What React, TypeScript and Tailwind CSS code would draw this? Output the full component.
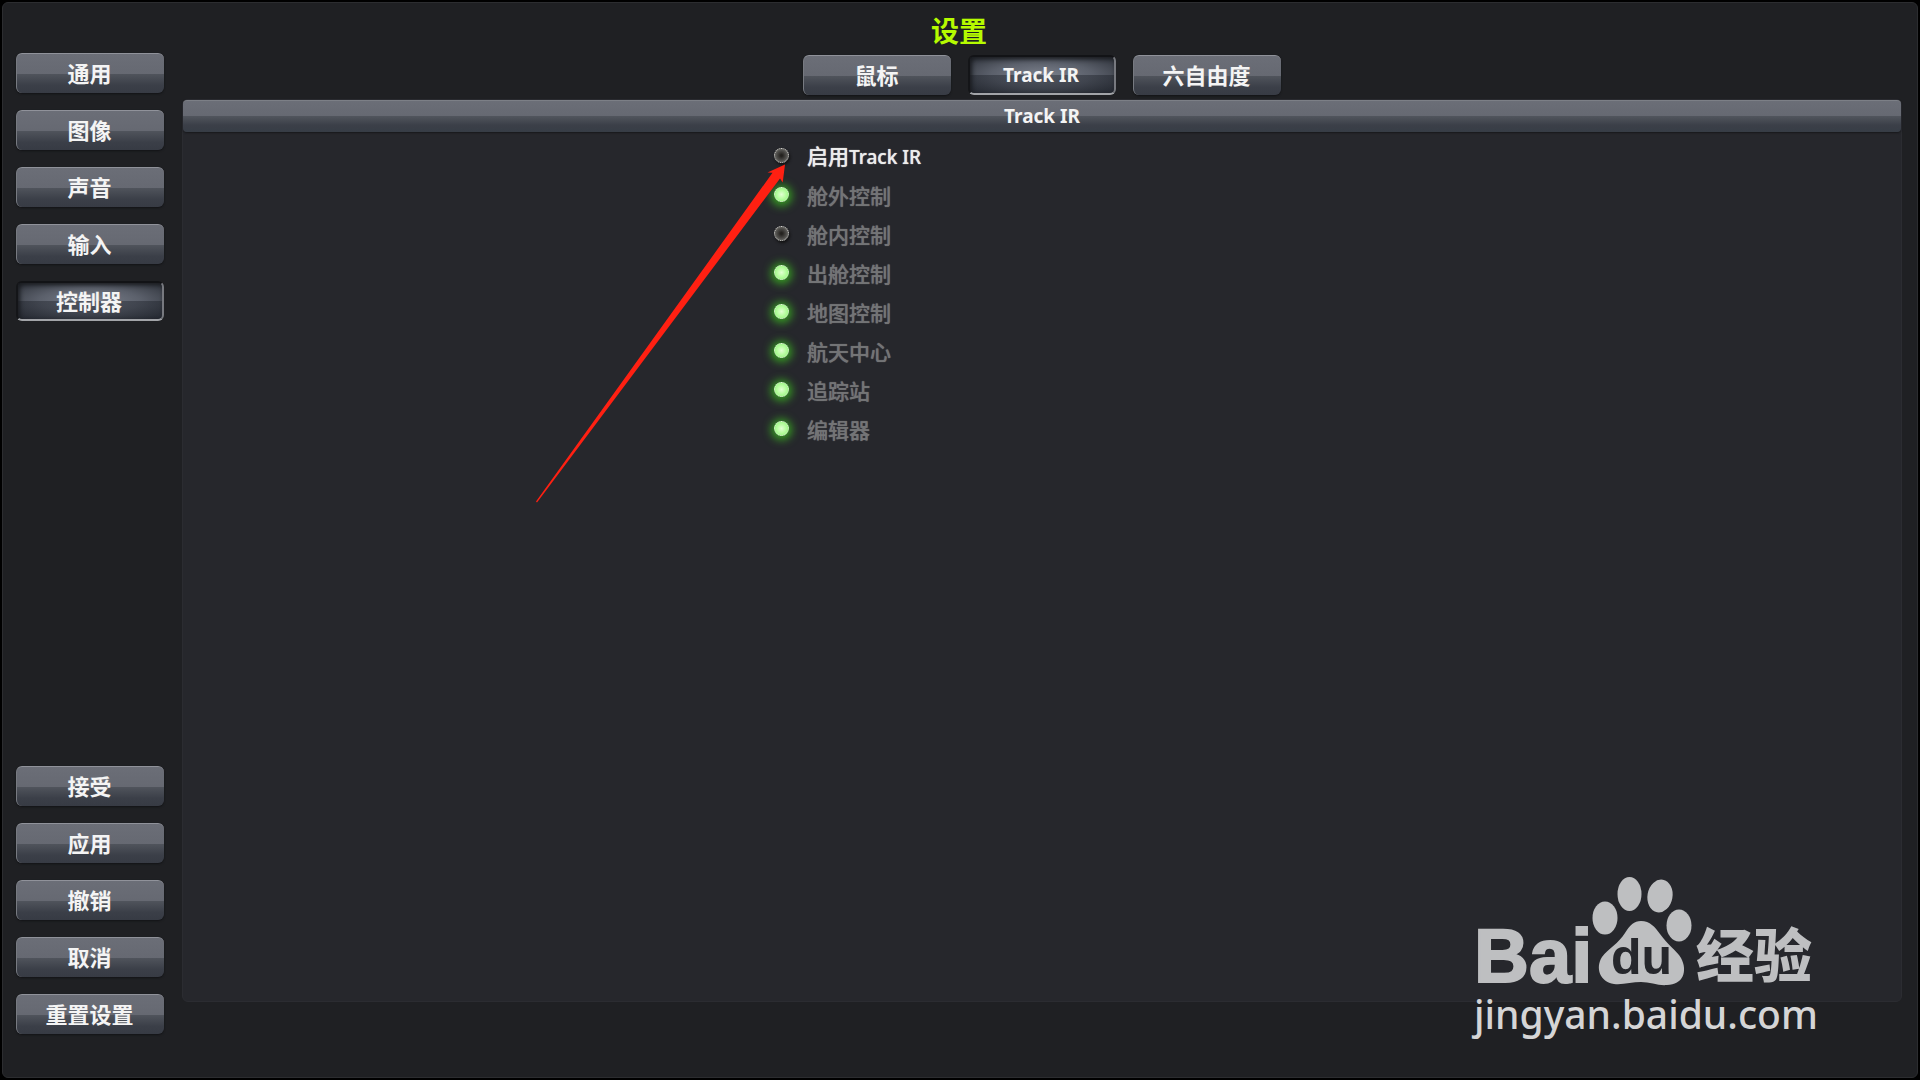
import { useState } from 'react';
import clsx from 'clsx';

const sections = ['通用', '图像', '声音', '输入', '控制器'];
const actions = ['接受', '应用', '撤销', '取消', '重置设置'];
const tabs = ['鼠标', 'Track IR', '六自由度'];

const initialOptions = [
  { id: 'enable', label: '启用', suffix: 'Track IR', on: false, active: true },
  { id: 'external', label: '舱外控制', on: true, active: false },
  { id: 'iva', label: '舱内控制', on: false, active: false },
  { id: 'eva', label: '出舱控制', on: true, active: false },
  { id: 'map', label: '地图控制', on: true, active: false },
  { id: 'ksc', label: '航天中心', on: true, active: false },
  { id: 'tracking', label: '追踪站', on: true, active: false },
  { id: 'editor', label: '编辑器', on: true, active: false },
];

interface GameButtonProps {
  label: string;
  selected?: boolean;
  onClick?: () => void;
}

function GameButton({ label, selected = false, onClick }: GameButtonProps) {
  return (
    <button
      type="button"
      onClick={onClick}
      className={clsx(
        'flex h-10 w-[148px] shrink-0 items-center justify-center rounded-md pr-0.5 text-[22px] leading-none font-bold text-[#f4f4f4]',
        selected
          ? 'border-2 border-t-[#121316] border-r-[#77797f] border-b-[#a2a4a8] border-l-[#141518] bg-[linear-gradient(to_bottom,transparent_50%,rgba(22,26,34,0.4)_50%),radial-gradient(ellipse_at_center,#7b808c_0%,#5b606b_50%,#2b2f37_100%)] shadow-[inset_2px_2px_4px_#1a1c20]'
          : 'border-t border-l border-t-[#90929a] border-l-[#777a81] bg-[linear-gradient(to_bottom,#6b6e77_0%,#666972_50%,#50545c_51%,#3b3f48_80%,#373b44_100%)] pb-0.5 shadow-[0_1px_2px_#121316]',
      )}
    >
      <span className={label === 'Track IR' ? 'text-[19px]' : undefined}>{label}</span>
    </button>
  );
}

interface LedOptionProps {
  id: string;
  label: string;
  suffix?: string;
  on: boolean;
  active: boolean;
  onToggle: () => void;
}

function LedOption({ id, label, suffix, on, active, onToggle }: LedOptionProps) {
  return (
    <li className="flex h-[39px] items-center gap-[18px] pl-[7px]">
      <input
        id={id}
        type="checkbox"
        checked={on}
        onChange={onToggle}
        className="size-[15px] appearance-none rounded-full border border-dotted border-[#d6d6d2] bg-[radial-gradient(circle,#24221f_10%,#4b4a47_50%,#84837f_100%)] shadow-[1px_2px_3px_#111] checked:border-[#e4f8dc] checked:bg-[radial-gradient(circle,#e2ffd2_0%,#b9fda2_45%,#8cf074_100%)] checked:shadow-[0_1px_9px_3px_#37a022]"
      />
      <label
        htmlFor={id}
        className={clsx(
          'pt-0.5 text-[21px] leading-6 font-medium [text-shadow:0_0_1px_currentColor]',
          active ? 'text-[#ececec]' : 'text-[#737476]',
        )}
      >
        {label}
        {suffix && <span className="text-[19px]">{suffix}</span>}
      </label>
    </li>
  );
}

function PointerArrow() {
  return (
    <svg className="pointer-events-none absolute top-16 left-[353px]" width="250" height="340" viewBox="0 0 250 340" aria-hidden="true">
      <path d="M249 0.5 L231.5 8.5 L236.5 8.8 L0 337.5 L1 338.5 L244 14.5 L246.7 18.5 Z" fill="#ff2012" />
    </svg>
  );
}

function Watermark() {
  return (
    <div className="pointer-events-none absolute right-[100px] bottom-[41px] w-[344px]">
      <svg viewBox="0 0 344 116" className="block w-full overflow-visible" role="img" aria-label="Baidu 经验">
        <g fill="#bebfc1">
          <text x="1" y="106" fontFamily="'Liberation Sans', sans-serif" fontWeight="700" fontSize="76" stroke="#bebfc1" strokeWidth="2">
            Bai
          </text>
          <ellipse cx="132" cy="42" rx="12.5" ry="16.5" />
          <ellipse cx="156.5" cy="18" rx="12" ry="17" />
          <ellipse cx="187" cy="20" rx="12.5" ry="16.5" transform="rotate(10 187 20)" />
          <ellipse cx="206" cy="49.5" rx="12.5" ry="16" />
          <path d="M168 45 C177 45 182 51 187 58 C194 68 204 75 208 82 C215 95 210 109 194 109 C186 110 177 106 168 106 C159 106 150 109 141 108 C127 106 122 92 129 81 C135 73 146 67 152 57 C157 49 161 45 168 45 Z" />
          <text x="223" y="101" fontFamily="'Noto Sans CJK SC', sans-serif" fontWeight="900" fontSize="58">
            经验
          </text>
        </g>
        <text x="138" y="98" fontFamily="'Liberation Sans', sans-serif" fontWeight="700" fontSize="50" fill="#26272c">
          du
        </text>
      </svg>
      <p className="pl-px font-['Noto_Sans'] text-[39px] leading-11 font-medium text-[#d5d5d6]">jingyan.baidu.com</p>
    </div>
  );
}

export default function App() {
  const [section, setSection] = useState('控制器');
  const [tab, setTab] = useState('Track IR');
  const [options, setOptions] = useState(initialOptions);

  const toggle = (id: string) => {
    setOptions((prev) => prev.map((o) => (o.id === id ? { ...o, on: !o.on } : o)));
  };

  return (
    <div className="flex min-h-screen bg-black p-0.5 font-['Noto_Sans','Noto_Sans_CJK_SC',sans-serif]">
      <div className="relative flex flex-1 flex-col rounded-md border border-[#2c2d30] bg-[#1f2023] pr-[15px] pb-[43px] pl-[13px]">
        <h1 className="flex h-[50px] items-center justify-center pt-1.5 text-[28px] leading-none font-bold text-[#b6fb00]">设置</h1>

        <div className="flex flex-1 gap-[18px]">
          <aside className="flex flex-col justify-between">
            <nav className="flex flex-col gap-[17px]">
              {sections.map((s) => (
                <GameButton key={s} label={s} selected={s === section} onClick={() => setSection(s)} />
              ))}
            </nav>
            <div className="flex flex-col gap-[17px]">
              {actions.map((a) => (
                <GameButton key={a} label={a} />
              ))}
            </div>
          </aside>

          <main className="flex flex-1 flex-col pt-0.5 pb-8">
            <div className="flex justify-center gap-[17px]">
              {tabs.map((t) => (
                <GameButton key={t} label={t} selected={t === tab} onClick={() => setTab(t)} />
              ))}
            </div>

            <section className="relative mt-1 flex-1 rounded-md border border-[#2b2c31] bg-[#26272c]">
              <h2 className="flex h-8 items-center justify-center rounded-sm border-t border-t-[#7c7f86] bg-[linear-gradient(to_bottom,#6b6e77_0%,#666972_48%,#50545c_50%,#3b3f48_78%,#373d46_100%)] text-[19px] leading-none font-bold text-[#f4f4f4] shadow-[0_1px_2px_#17181b]">
                {tab}
              </h2>
              <ul className="mt-1 pl-[34%]">
                {options.map((o) => (
                  <LedOption key={o.id} {...o} onToggle={() => toggle(o.id)} />
                ))}
              </ul>
              <PointerArrow />
            </section>
          </main>
        </div>

        <Watermark />
      </div>
    </div>
  );
}
